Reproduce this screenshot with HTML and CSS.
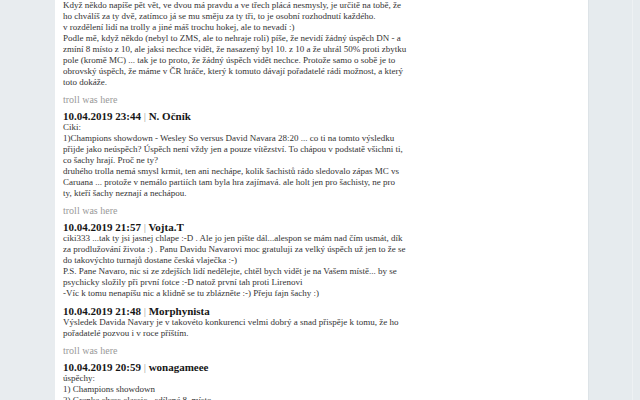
FILE: index.html
```html
<!DOCTYPE html>
<html>
  <head>
    <title>Komentáře</title>
    <link rel="stylesheet" href="styles.css">
  </head>
  <body>
    <div class="page">
      <div class="side-left"></div>
      <div class="comments">
        <div class="comment">
          <div class="text">
            Když někdo napíše pět vět, ve dvou má pravdu a ve třech plácá nesmysly, je určitě na tobě, že<br>
            ho chválíš za ty dvě, zatímco já se mu směju za ty tři, to je osobní rozhodnutí každého.<br>
            v rozdělení lidí na trolly a jiné máš trochu hokej, ale to nevadí :)<br>
            Podle mě, když někdo (nebyl to ZMS, ale to nehraje roli) píše, že nevidí žádný úspěch DN - a<br>
            zmíní 8 místo z 10, ale jaksi nechce vidět, že nasazený byl 10. z 10 a že uhrál 50% proti zbytku<br>
            pole (kromě MC) ... tak je to proto, že žádný úspěch vidět nechce. Protože samo o sobě je to<br>
            obrovský úspěch, že máme v ČR hráče, který k tomuto dávají pořadatelé rádi možnost, a který<br>
            toto dokáže.
          </div>
        </div>
        <div class="troll">troll was here</div>

        <div class="comment">
          <div class="head">10.04.2019 23:44 <span class="sep">|</span> N. Očník</div>
          <div class="text">
            Ciki:<br>
            1)Champions showdown - Wesley So versus David Navara 28:20 ... co ti na tomto výsledku<br>
            přijde jako neúspěch? Úspěch není vždy jen a pouze vítězství. To chápou v podstatě všichni ti,<br>
            co šachy hrají. Proč ne ty?<br>
            druhého trolla nemá smysl krmit, ten ani nechápe, kolik šachistů rádo sledovalo zápas MC vs<br>
            Caruana ... protože v nemálo partiích tam byla hra zajímavá. ale holt jen pro šachisty, ne pro<br>
            ty, kteří šachy neznají a nechápou.
          </div>
        </div>
        <div class="troll">troll was here</div>

        <div class="comment">
          <div class="head">10.04.2019 21:57 <span class="sep">|</span> Vojta.T</div>
          <div class="text">
            ciki333 ...tak ty jsi jasnej chlape :-D . Ale jo jen pište dál...alespon se mám nad čím usmát, dík<br>
            za prodlužování života :) . Panu Davidu Navarovi moc gratuluji za velký úspěch už jen to že se<br>
            do takovýchto turnajů dostane česká vlaječka :-)<br>
            P.S. Pane Navaro, nic si ze zdejších lidí nedělejte, chtěl bych vidět je na Vašem místě... by se<br>
            psychicky složily při první fotce :-D natož první tah proti Lirenovi<br>
            -Víc k tomu nenapíšu nic a klidně se tu zblázněte :-) Přeju fajn šachy :)
          </div>
        </div>

        <div class="comment">
          <div class="head">10.04.2019 21:48 <span class="sep">|</span> Morphynista</div>
          <div class="text">
            Výsledek Davida Navary je v takovéto konkurenci velmi dobrý a snad přispěje k tomu, že ho<br>
            pořadatelé pozvou i v roce příštím.
          </div>
        </div>
        <div class="troll">troll was here</div>

        <div class="comment">
          <div class="head">10.04.2019 20:59 <span class="sep">|</span> wonagameee</div>
          <div class="text">
            úspěchy:<br>
            1) Champions showdown<br>
            2) Grenke chess classic - sdílené 8. místo
          </div>
        </div>
      </div>
      <div class="side-right"><div class="rail"></div></div>
    </div>
  </body>
</html>
```

FILE: styles.css
```css
body {
  margin: 0;
  font-family: "Liberation Serif", "DejaVu Serif", serif;
  background: #fff;
  overflow: hidden;
}
.page {
  display: flex;
  height: 400px;
}
.side-left {
  width: 55px;
  flex-shrink: 0;
  background: #e8ecef;
}
.comments {
  flex: 1;
  padding-left: 8px;
  white-space: nowrap;
  overflow: hidden;
}
.side-right {
  width: 51px;
  flex-shrink: 0;
  background: #e6ebee;
  border-left: 1px solid #dde3e7;
  display: flex;
  justify-content: flex-end;
}
.rail {
  width: 7px;
  border-left: 1px solid #eef1f3;
}
.comment {
  margin-bottom: 6px;
}
.head {
  font-size: 11px;
  font-weight: bold;
  line-height: 12px;
  color: #161616;
}
.sep {
  font-weight: normal;
  color: #9a9a9a;
}
.text {
  font-size: 9px;
  line-height: 11px;
  color: #333;
}
.troll {
  font-size: 10px;
  line-height: 12px;
  color: #999;
  margin-bottom: 4px;
}
```
